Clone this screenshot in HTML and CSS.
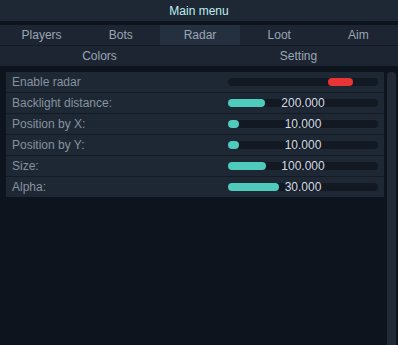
FILE: index.html
```html
<!DOCTYPE html>
<html lang="en">
<head>
    <meta charset="UTF-8">
    <meta name="viewport" content="width=device-width, initial-scale=1.0">
    <title>Main menu</title>
    <link rel="stylesheet" href="styles.css">
</head>
<body>

    <div class="titulo">Main menu</div>

    <div class="tabs">
        <div class="tab">Players</div>
        <div class="tab">Bots</div>
        <div class="tab activo">Radar</div>
        <div class="tab">Loot</div>
        <div class="tab">Aim</div>
    </div>

    <div class="subtabs">
        <div class="tab">Colors</div>
        <div class="tab">Setting</div>
    </div>

    <div class="cuerpo">
        <div class="lista">
            <div class="fila">
                <span class="etiqueta">Enable radar</span>
                <div class="pista"><div class="relleno rojo" style="width: 25px"></div></div>
            </div>
            <div class="fila">
                <span class="etiqueta">Backlight distance:</span>
                <div class="pista"><div class="relleno" style="width: 37px"></div><span class="valor">200.000</span></div>
            </div>
            <div class="fila">
                <span class="etiqueta">Position by X:</span>
                <div class="pista"><div class="relleno" style="width: 11px"></div><span class="valor">10.000</span></div>
            </div>
            <div class="fila">
                <span class="etiqueta">Position by Y:</span>
                <div class="pista"><div class="relleno" style="width: 11px"></div><span class="valor">10.000</span></div>
            </div>
            <div class="fila">
                <span class="etiqueta">Size:</span>
                <div class="pista"><div class="relleno" style="width: 38px"></div><span class="valor">100.000</span></div>
            </div>
            <div class="fila">
                <span class="etiqueta">Alpha:</span>
                <div class="pista"><div class="relleno" style="width: 51px"></div><span class="valor">30.000</span></div>
            </div>
        </div>
        <div class="scroll"></div>
    </div>

</body>
</html>
```

FILE: styles.css
```css
html, body {
    height: 100%;
}
body {
    margin: 0;
    font-family: "Liberation Sans", Arial, sans-serif;
    font-size: 12px;
    background-color: #0e141d;
    color: #86929f;
    display: flex;
    flex-direction: column;
    overflow: hidden;
}
.titulo {
    height: 21px;
    line-height: 22px;
    text-align: center;
    background-color: #1e2835;
    color: #bdeef0;
    font-size: 12px;
    margin-bottom: 4px;
}
.tabs, .subtabs {
    display: flex;
    background-color: #1c2531;
}
.tabs {
    height: 20px;
    border-bottom: 1px solid #131a23;
    padding-left: 2px;
}
.subtabs {
    height: 20px;
    margin-bottom: 6px;
}
.tab {
    flex: 1;
    text-align: center;
    line-height: 21px;
    color: #9aa6b3;
}
.tab.activo {
    background-color: #243040;
}
.cuerpo {
    flex: 1;
    display: flex;
    padding-left: 6px;
    padding-right: 2px;
}
.lista {
    width: 378px;
    align-self: flex-start;
    background-color: #1e2834;
}
.fila {
    height: 20px;
    display: flex;
    align-items: center;
    border-bottom: 1px solid #141b24;
    padding-left: 6px;
}
.fila:last-child {
    border-bottom: none;
}
.etiqueta {
    flex: 1;
    line-height: 20px;
}
.pista {
    position: relative;
    width: 150px;
    height: 8px;
    margin-right: 6px;
    border-radius: 4px;
    background-color: #121922;
    display: flex;
    align-items: center;
}
.relleno {
    height: 8px;
    border-radius: 4px;
    background-color: #4ecbbd;
}
.relleno.rojo {
    margin-left: 100px;
    background-color: #e83434;
}
.valor {
    position: absolute;
    left: 0;
    right: 0;
    text-align: center;
    color: #d4dbe3;
    font-size: 12px;
    line-height: 12px;
}
.scroll {
    width: 9px;
    margin-left: 3px;
    background-color: #212b38;
    border-radius: 4px 4px 0 0;
}
```
